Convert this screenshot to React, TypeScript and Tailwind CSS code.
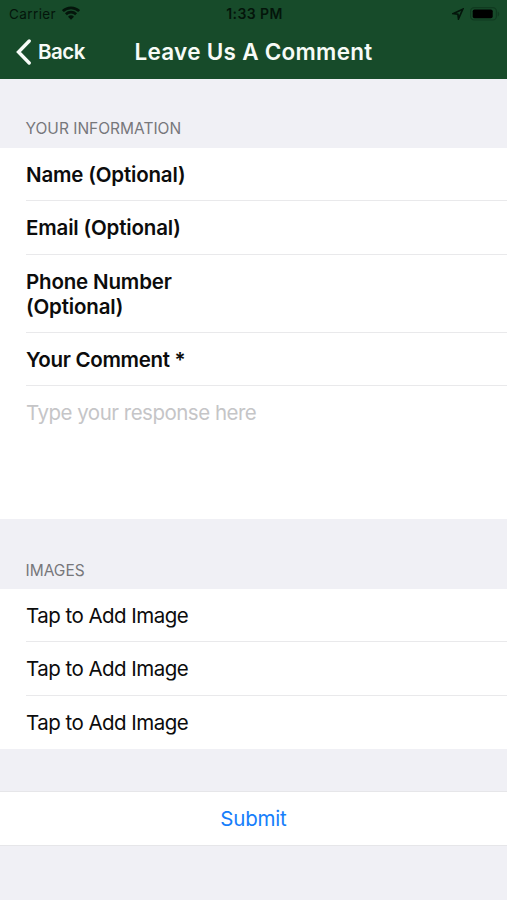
import React from "react";

function StatusBar() {
  return (
    <div className="grid h-[27px] grid-cols-3 items-center pl-[9px] pr-[7px] text-[13.5px] text-[#04150b]">
      <div className="flex items-center gap-[6px]">
        <span className="pt-px tracking-[0.4px]">Carrier</span>
        <svg className="-mt-px h-[14px] w-[18px]" viewBox="0 0 18 14" fill="none" stroke="currentColor" strokeWidth="2.7">
          <path d="M0.9 5.1a11.6 11.6 0 0 1 16.2 0" />
          <path d="M3.9 8.3a7.3 7.3 0 0 1 10.2 0" />
          <path d="M9 13.8 6 10.8a4.3 4.3 0 0 1 6 0z" fill="currentColor" stroke="none" />
        </svg>
      </div>
      <span className="-mt-px whitespace-nowrap text-center text-[14px] font-semibold tracking-[0.4px]">1:33 PM</span>
      <div className="flex items-center justify-end gap-[6px]">
        <svg className="h-[12px] w-[12px]" viewBox="0 0 12 12" fill="none" stroke="currentColor" strokeWidth="1.7" strokeLinejoin="miter">
          <path d="M10.7 1.3 1.5 5.6l4.4.6.6 4.6z" />
        </svg>
        <svg className="h-[14px] w-[30px]" viewBox="0 0 30 14">
          <rect x="0.6" y="0.6" width="25.8" height="12.4" rx="3.6" fill="none" stroke="#103b20" strokeWidth="1.2" />
          <rect x="2.7" y="2.4" width="20" height="8.8" rx="1.8" fill="#000" />
          <path d="M27.7 4.5v5c2-.9 2-4.1 0-5z" fill="#103b20" />
        </svg>
      </div>
    </div>
  );
}

function NavBar() {
  return (
    <div className="relative flex h-[52px] justify-center pt-[11px] font-semibold text-[#f7fbf7]">
      <button className="absolute left-[16px] top-[12px] flex items-center gap-[7px] text-[20.5px] leading-[26px] tracking-[-0.5px]">
        <svg className="h-[26px] w-[15px]" viewBox="0 0 15 26" fill="none" stroke="currentColor" strokeWidth="3.4" strokeLinecap="round">
          <path d="M13.2 2 2.5 13l10.7 11" />
        </svg>
        Back
      </button>
      <h1 className="text-[22.5px] leading-[28px] tracking-[0.28px]">Leave Us A Comment</h1>
    </div>
  );
}

function SectionHeader({ children, className }: { children: React.ReactNode; className: string }) {
  return (
    <h2 className={`flex items-end pl-[25.5px] text-[15.5px] leading-[20px] tracking-normal text-[#77777b] ${className}`}>
      {children}
    </h2>
  );
}

function Row({ children, size = "h-[54px]", last = false }: { children: React.ReactNode; size?: string; last?: boolean }) {
  return (
    <div className={`bg-white pl-[26px] ${size}`}>
      <div className={`flex h-full items-center pt-[2px] leading-[24.5px] ${last ? "" : "border-b border-[#e9e9eb]"}`}>
        {children}
      </div>
    </div>
  );
}

export default function App() {
  return (
    <main className="h-[900px] w-full overflow-hidden bg-[#f0f0f5] text-[20.5px] text-[#0c0c0c] [font-family:Inter,'Liberation_Sans',sans-serif]">
      <header className="h-[79px] bg-[#174b2a]">
        <StatusBar />
        <NavBar />
      </header>
      <SectionHeader className="h-[69px] pb-[9px]">YOUR INFORMATION</SectionHeader>
      <section className="h-[371px] bg-white font-semibold tracking-[-0.17px]">
        <Row size="h-[53px]">Name (Optional)</Row>
        <Row>Email (Optional)</Row>
        <Row size="h-[78px]"><span className="w-[180px]">Phone Number (Optional)</span></Row>
        <Row size="h-[53px]"><span className="tracking-[-0.3px]">Your Comment *</span></Row>
        <p className="pl-[26px] pt-[14px] font-normal leading-[25px] tracking-[-0.5px] text-[#c5c5c7]">Type your response here</p>
      </section>
      <SectionHeader className="h-[70px] pb-[8px]">IMAGES</SectionHeader>
      <section className="tracking-[-0.53px]">
        <Row size="h-[53px]">Tap to Add Image</Row>
        <Row>Tap to Add Image</Row>
        <Row size="h-[53px]" last>Tap to Add Image</Row>
      </section>
      <button className="mt-[42px] flex h-[55px] w-full items-center justify-center border-y border-[#e6e6e9] bg-white pt-[2px] tracking-[-0.2px] text-[#167efb]">
        Submit
      </button>
    </main>
  );
}
